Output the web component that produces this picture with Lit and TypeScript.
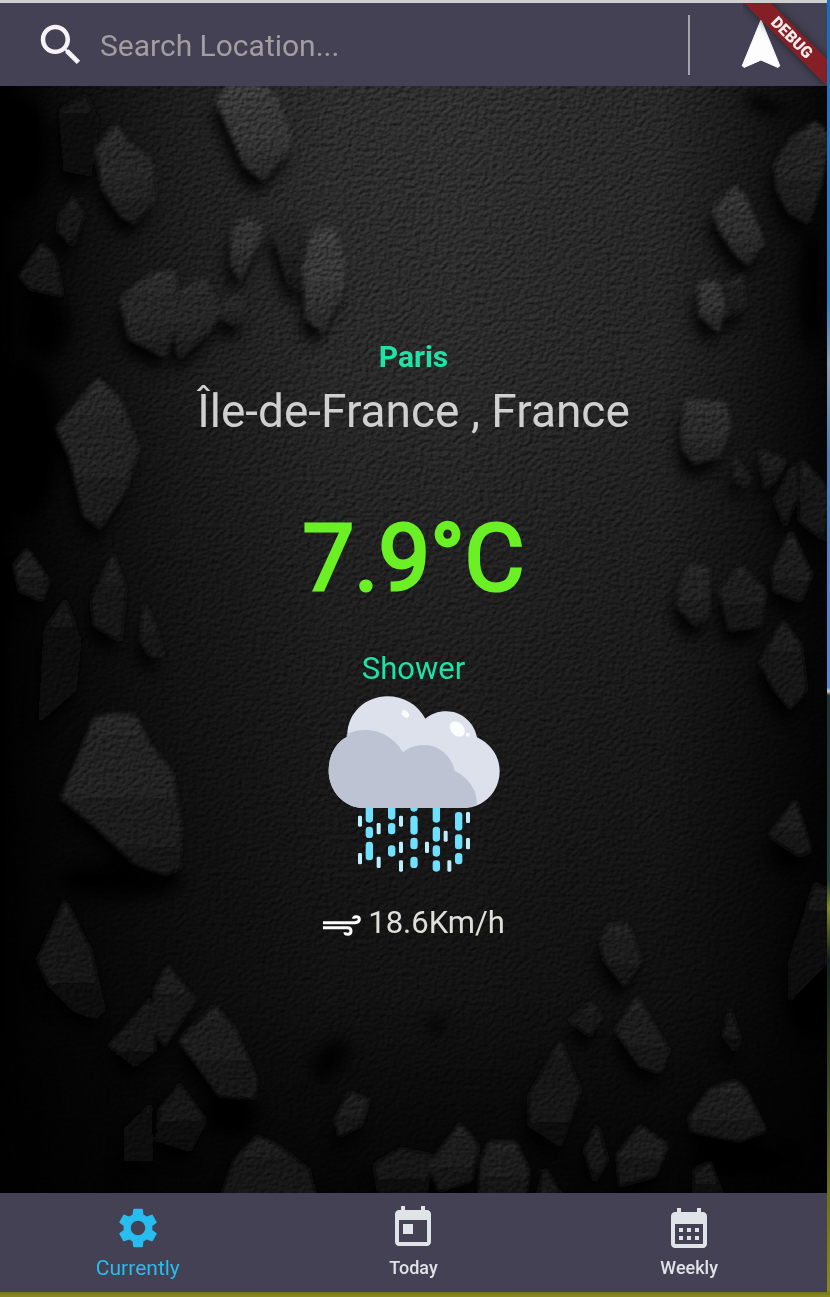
import { LitElement, html, svg, css } from "lit";
import { customElement, state } from "lit/decorators.js";

interface Rock {
  points: string;
  shade: string;
}

// Stones of the backdrop, in the scene's own coordinates.
const rocks: Rock[] = [
  { points: "20,275 42,245 55,258 62,295 30,288", shade: "#181818" },
  { points: "60,215 73,198 84,215 72,245 58,230", shade: "#171717" },
  { points: "60,110 85,95 98,120 90,175 65,170", shade: "#0f0f0f" },
  { points: "97,148 116,126 128,143 145,155 152,165 153,200 134,222 122,216 103,188", shade: "#262626" },
  { points: "217,101 228,86 262,84 278,100 291,140 288,150 263,179 245,165 232,135", shade: "#363636" },
  { points: "236,225 246,218 261,225 259,240 240,278 232,265 232,240", shade: "#303030" },
  { points: "272,230 290,215 302,225 300,290 290,285", shade: "#202020" },
  { points: "312,235 318,229 334,229 344,260 343,290 322,330 307,318 304,265", shade: "#373737" },
  { points: "121,300 130,290 155,273 175,272 176,320 165,356 130,338", shade: "#272727" },
  { points: "180,290 205,278 220,310 210,330 180,357 176,340", shade: "#262626" },
  { points: "225,300 240,296 245,315 235,325 222,318", shade: "#252525" },
  { points: "57,428 98,379 120,400 138,448 125,490 100,527 85,515 70,455", shade: "#232323" },
  { points: "15,565 27,550 48,580 42,600 20,590", shade: "#1a1a1a" },
  { points: "92,600 113,555 125,590 120,640 95,625", shade: "#191919" },
  { points: "145,605 152,620 163,655 150,655 141,640", shade: "#1a1a1a" },
  { points: "45,630 65,600 80,640 75,690 40,720", shade: "#0f0f0f" },
  { points: "62,797 95,718 115,714 135,716 150,745 172,773 180,830 178,868 165,873 135,862 95,825", shade: "#202020" },
  { points: "38,960 65,902 90,950 103,1010 95,1017 75,1010 50,985", shade: "#141414" },
  { points: "110,1045 150,1000 155,1050 135,1065", shade: "#151515" },
  { points: "155,990 168,967 195,1000 165,1045 155,1030", shade: "#191919" },
  { points: "180,1040 215,1007 235,1030 256,1080 254,1097 220,1095", shade: "#1b1b1b" },
  { points: "160,1110 180,1085 205,1120 190,1150 158,1140", shade: "#121212" },
  { points: "125,1130 150,1105 152,1160 125,1160", shade: "#0d0d0d" },
  { points: "222,1196 235,1160 258,1137 275,1145 308,1170 315,1196", shade: "#191919" },
  { points: "335,1120 350,1094 368,1100 360,1125 340,1135", shade: "#1a1a1a" },
  { points: "375,1165 400,1150 430,1155 425,1196 380,1196", shade: "#131313" },
  { points: "775,165 790,140 815,122 829,135 820,185 808,222 790,213 778,190", shade: "#212121" },
  { points: "713,209 735,187 745,197 763,242 748,263 737,255 720,230", shade: "#2f2f2f" },
  { points: "722,285 742,275 745,305 728,318", shade: "#1e1e1e" },
  { points: "699,285 705,281 718,283 724,310 718,330 700,315", shade: "#303030" },
  { points: "682,430 687,400 725,403 730,425 720,455 695,463 684,450", shade: "#2b2b2b" },
  { points: "760,450 785,460 775,480 765,488", shade: "#1a1a1a" },
  { points: "735,458 750,478 745,486 735,478", shade: "#1d1d1d" },
  { points: "775,500 795,464 797,495 785,525", shade: "#171717" },
  { points: "802,460 829,490 824,540 800,520", shade: "#171717" },
  { points: "773,570 791,533 811,575 800,600 775,590", shade: "#1d1d1d" },
  { points: "680,585 690,565 708,568 708,615 695,625 677,605", shade: "#212121" },
  { points: "720,590 740,566 765,590 760,625 730,630", shade: "#1b1b1b" },
  { points: "760,662 783,622 800,645 806,690 790,708 775,690", shade: "#191919" },
  { points: "770,835 795,802 810,850 800,855", shade: "#1a1a1a" },
  { points: "790,960 815,884 829,890 829,960 790,1000", shade: "#0f0f0f" },
  { points: "730,1010 740,1040 735,1050 724,1035", shade: "#141414" },
  { points: "601,940 610,925 628,925 640,960 625,985 605,960", shade: "#1c1c1c" },
  { points: "570,1020 592,1003 602,1018 590,1035", shade: "#191919" },
  { points: "616,1030 637,998 668,1050 660,1072 640,1065", shade: "#1c1c1c" },
  { points: "530,1095 560,1042 580,1090 560,1145 530,1125", shade: "#151515" },
  { points: "690,1118 710,1090 735,1082 745,1090 765,1130 740,1140 692,1130", shade: "#1c1c1c" },
  { points: "430,1165 460,1125 477,1145 470,1180 440,1190", shade: "#1c1c1c" },
  { points: "482,1160 490,1143 515,1143 528,1170 525,1196 480,1196", shade: "#1c1c1c" },
  { points: "585,1150 597,1127 607,1160 595,1180", shade: "#161616" },
  { points: "618,1155 640,1127 667,1145 655,1175 620,1185", shade: "#1a1a1a" },
  { points: "538,1196 545,1170 562,1196", shade: "#171717" },
  { points: "695,1170 710,1163 722,1196 695,1196", shade: "#131313" },
];

@customElement("stone-backdrop")
class StoneBackdrop extends LitElement {
  static styles = css`
    :host {
      display: block;
    }
    svg {
      display: block;
      width: 100%;
      height: 100%;
    }
    .grain {
      mix-blend-mode: overlay;
    }
  `;

  render() {
    return html`
      <svg viewBox="0 86 827 1107" preserveAspectRatio="xMidYMid slice" aria-hidden="true">
        <defs>
          <linearGradient id="base" x1="0" y1="0" x2="0" y2="1">
            <stop offset="0" stop-color="#303030" />
            <stop offset="0.25" stop-color="#2b2b2b" />
            <stop offset="0.5" stop-color="#1f1f1f" />
            <stop offset="0.75" stop-color="#151515" />
            <stop offset="1" stop-color="#0c0c0c" />
          </linearGradient>
          <linearGradient id="sides" x1="0" y1="0" x2="1" y2="0">
            <stop offset="0" stop-color="#000" stop-opacity="1" />
            <stop offset="0.08" stop-color="#000" stop-opacity="0.75" />
            <stop offset="0.22" stop-color="#000" stop-opacity="0.38" />
            <stop offset="0.4" stop-color="#000" stop-opacity="0.05" />
            <stop offset="0.55" stop-color="#000" stop-opacity="0" />
            <stop offset="0.8" stop-color="#000" stop-opacity="0.15" />
            <stop offset="0.9" stop-color="#000" stop-opacity="0.5" />
            <stop offset="1" stop-color="#000" stop-opacity="0.9" />
          </linearGradient>
          <linearGradient id="floor" x1="0" y1="0" x2="0" y2="1">
            <stop offset="0.82" stop-color="#000" stop-opacity="0" />
            <stop offset="1" stop-color="#000" stop-opacity="0.6" />
          </linearGradient>
          <filter id="shadow" x="-10%" y="-10%" width="120%" height="120%">
            <feGaussianBlur stdDeviation="7" />
          </filter>
          <filter id="soft" x="-5%" y="-5%" width="110%" height="110%">
            <feGaussianBlur stdDeviation="2" />
          </filter>
          <filter id="relief" x="0" y="0" width="100%" height="100%" color-interpolation-filters="sRGB">
            <feTurbulence type="fractalNoise" baseFrequency="0.22 0.24" numOctaves="2" seed="8" />
            <feColorMatrix values="0 0 0 0 0  0 0 0 0 0  0 0 0 0 0  1 0 0 0 0" />
            <feDiffuseLighting surfaceScale="1.2" diffuseConstant="0.7" lighting-color="#fff">
              <feDistantLight azimuth="235" elevation="45" />
            </feDiffuseLighting>
          </filter>
          <linearGradient id="rim" x1="0" y1="0" x2="0" y2="1">
            <stop offset="0" stop-color="#fff" stop-opacity="0.04" />
            <stop offset="0.5" stop-color="#000" stop-opacity="0" />
            <stop offset="1" stop-color="#000" stop-opacity="0.3" />
          </linearGradient>
        </defs>
        <rect y="86" width="827" height="1107" fill="url(#base)" />
        <rect y="86" width="827" height="1107" fill="url(#sides)" />
        <rect y="86" width="827" height="1107" fill="url(#floor)" />
        <g filter="url(#shadow)" fill="#000" opacity="0.9">
          <ellipse cx="20" cy="150" rx="30" ry="55" />
          <ellipse cx="45" cy="325" rx="25" ry="35" />
          <ellipse cx="25" cy="440" rx="35" ry="80" />
          <ellipse cx="120" cy="880" rx="62" ry="20" />
          <ellipse cx="230" cy="1115" rx="28" ry="24" />
          <ellipse cx="812" cy="290" rx="14" ry="60" />
          <ellipse cx="808" cy="1000" rx="24" ry="40" />
          <ellipse cx="790" cy="860" rx="20" ry="12" />
          <ellipse cx="765" cy="105" rx="22" ry="8" transform="rotate(20 765 105)" />
          <ellipse cx="330" cy="1060" rx="14" ry="24" transform="rotate(40 330 1060)" />
          <ellipse cx="436" cy="1025" rx="8" ry="8" />
          <ellipse cx="740" cy="1160" rx="50" ry="16" />
          <g transform="translate(-5 15)">${rocks.map((r) => svg`<polygon points=${r.points} />`)}</g>
        </g>
        <g filter="url(#soft)" stroke-linejoin="round">
          ${rocks.map(
            (r) => svg`
              <polygon points=${r.points} fill=${r.shade} stroke=${r.shade} stroke-width="3" />
              <polygon points=${r.points} fill="url(#rim)" />`
          )}
        </g>
        <rect class="grain" y="86" width="827" height="1107" filter="url(#relief)" />
      </svg>
    `;
  }
}

// Rain under the cloud: x, top, bottom.
const heavyDrops = [
  [195, 490, 546], [195, 558, 592], [195, 603, 659],
  [262, 490, 537], [262, 547, 581], [262, 614, 648],
  [329, 480, 513], [329, 525, 582], [329, 591, 626], [329, 648, 682],
  [396, 480, 546], [396, 558, 603], [396, 614, 648], [396, 659, 693],
  [463, 514, 570], [463, 581, 626], [463, 637, 671],
];
const lightDrops = [
  [172, 525, 558], [172, 637, 671], [228, 547, 581], [228, 648, 682],
  [295, 525, 558], [295, 603, 637], [295, 659, 693], [373, 603, 637],
  [429, 570, 603], [440, 659, 693], [496, 514, 547], [496, 592, 626],
];

const showerIcon = html`
  <svg class="shower" viewBox="82 166 516 528" role="img" aria-label="Shower">
    ${heavyDrops.map(([x, a, b]) => svg`<rect x=${x} y=${a} width="22" height=${b - a} rx="10" fill="#6fe1ff" />`)}
    ${lightDrops.map(([x, a, b]) => svg`<rect x=${x} y=${a} width="12" height=${b - a} rx="4" fill="#bdeefb" />`)}
    <path fill="#dde1ec" d="M190 502H490C550 502 597 452 597 392C597 345 570 310 529 290C520 245 483 212 437 212C412 212 391 220 374 234C350 190 308 167 260 167C195 167 138 217 140 288C105 305 84 345 84 390C84 452 132 502 190 502Z" />
    <path fill="#bdc3d2" d="M138 281C155 272 172 268 195 268C240 268 285 295 307 335C325 320 345 313 371 313C415 313 453 345 462 391C500 408 529 445 529 490C515 498 500 502 485 502H190C132 502 84 452 84 390C84 345 105 305 138 289Z" />
    <g fill="#fafcff">
      <ellipse cx="314" cy="220" rx="13" ry="9" transform="rotate(45 314 220)" />
      <ellipse cx="470" cy="265" rx="26" ry="19" transform="rotate(45 470 265)" />
      <circle cx="501" cy="282" r="6" />
    </g>
  </svg>
`;

const tabs = [
  {
    label: "Currently",
    icon: "M19.14 12.94c.04-.3.06-.61.06-.94 0-.32-.02-.64-.07-.94l2.03-1.58c.18-.14.23-.41.12-.61l-1.92-3.32c-.12-.22-.37-.29-.59-.22l-2.39.96c-.5-.38-1.03-.7-1.62-.94l-.36-2.54c-.04-.24-.24-.41-.48-.41h-3.84c-.24 0-.43.17-.47.41l-.36 2.54c-.59.24-1.13.57-1.62.94l-2.39-.96c-.22-.08-.47 0-.59.22L2.74 8.87c-.12.21-.08.47.12.61l2.03 1.58c-.05.3-.09.63-.09.94s.02.64.07.94l-2.03 1.58c-.18.14-.23.41-.12.61l1.92 3.32c.12.22.37.29.59.22l2.39-.96c.5.38 1.03.7 1.62.94l.36 2.54c.05.24.24.41.48.41h3.84c.24 0 .44-.17.47-.41l.36-2.54c.59-.24 1.13-.56 1.62-.94l2.39.96c.22.08.47 0 .59-.22l1.92-3.32c.12-.22.07-.47-.12-.61l-2.01-1.58zM12 15.6c-1.98 0-3.6-1.62-3.6-3.6s1.62-3.6 3.6-3.6 3.6 1.62 3.6 3.6-1.62 3.6-3.6 3.6z",
  },
  {
    label: "Today",
    icon: "M19 3h-1V1h-2v2H8V1H6v2H5c-1.11 0-1.99.9-1.99 2L3 19c0 1.1.89 2 2 2h14c1.1 0 2-.9 2-2V5c0-1.1-.9-2-2-2zm0 16H5V8h14v11zM7 10h5v5H7z",
  },
  {
    label: "Weekly",
    icon: "M19 4h-1V2h-2v2H8V2H6v2H5c-1.11 0-1.99.9-1.99 2L3 20c0 1.1.89 2 2 2h14c1.1 0 2-.9 2-2V6c0-1.1-.9-2-2-2zm0 16H5V10h14v10zM9 14H7v-2h2v2zm4 0h-2v-2h2v2zm4 0h-2v-2h2v2zm-8 4H7v-2h2v2zm4 0h-2v-2h2v2zm4 0h-2v-2h2v2z",
  },
];

@customElement("app-root")
class AppRoot extends LitElement {
  static styles = css`
    :host {
      display: flex;
      min-height: 100vh;
      box-sizing: border-box;
      padding: 0 3px 5px 0;
      font-family: Roboto, "Liberation Sans", sans-serif;
      background:
        linear-gradient(#77761c, #8b8a1e) bottom / 100% 5px no-repeat,
        linear-gradient(
          #1b6fb5 0, #2580c8 23%, #8a9cb0 28%, #4a7fb5 35%, #4d8fd0 53%,
          #c8ccd0 53.3%, #1d3236 53.6%, #24423a 68%, #7e8c1c 70%, #10201f 74%,
          #3c4a18 84%, #6d7218 92%, #8b8a1e 100%
        );
    }
    .window {
      flex: 1;
      display: flex;
      flex-direction: column;
      position: relative;
      border-top: 3px solid #cfcfcf;
      background: #000;
    }
    .bar {
      display: flex;
      align-items: center;
      height: 83px;
      padding: 0 36px 0 34px;
      background: #444154;
    }
    .search {
      flex: 1;
      display: flex;
      align-items: center;
      gap: 12px;
    }
    .search svg {
      width: 54px;
      height: 54px;
      fill: #f5f3f7;
    }
    .search input {
      flex: 1;
      min-width: 0;
      padding: 2px 0 0;
      border: 0;
      outline: 0;
      background: none;
      color: #f5f3f7;
      font: 30px/36px Roboto, "Liberation Sans", sans-serif;
    }
    .search input::placeholder {
      color: #a09e9f;
      opacity: 1;
    }
    .rule {
      width: 2px;
      height: 60px;
      margin-right: 41px;
      background: #a8a4ad;
    }
    .locate {
      display: block;
      padding: 0;
      border: 0;
      background: none;
    }
    .locate svg {
      display: block;
      width: 60px;
      height: 60px;
      fill: #fdfdfd;
      stroke: #fdfdfd;
      stroke-width: 0.4;
      stroke-linejoin: round;
    }
    .corner {
      position: absolute;
      top: 0;
      right: 0;
      width: 84px;
      height: 83px;
      overflow: hidden;
      pointer-events: none;
    }
    .ribbon {
      position: absolute;
      top: 25px;
      left: -11px;
      width: 120px;
      transform: rotate(45deg);
      background: #831f25;
      box-shadow: 0 0 10px rgba(0, 0, 0, 0.5);
      color: #f5eded;
      font-size: 16px;
      font-weight: 900;
      line-height: 19px;
      text-align: center;
    }
    .scene {
      flex: 1;
      display: grid;
      min-height: 640px;
    }
    stone-backdrop {
      grid-area: 1 / 1;
      height: 0;
      min-height: 100%;
    }
    .weather {
      grid-area: 1 / 1;
      z-index: 1;
      display: flex;
      flex-direction: column;
      align-items: center;
      justify-content: center;
      text-align: center;
    }
    .weather p,
    .weather h1 {
      margin: 0;
    }
    .weather .city {
      color: #1fe3a4;
      font-size: 30px;
      font-weight: 700;
      line-height: 36px;
    }
    .weather .region {
      margin-top: 10px;
      color: #d0d0d0;
      font-size: 46px;
      line-height: 52px;
    }
    .weather .temperature {
      margin-top: 66px;
      color: #6af024;
      font-size: 92px;
      font-weight: 400;
      line-height: 112px;
      -webkit-text-stroke: 3px #6af024;
    }
    .weather .condition {
      margin-top: 36px;
      color: #1fe3a4;
      font-size: 31px;
      line-height: 36px;
    }
    .shower {
      width: 172px;
      height: 176px;
      margin-top: 9px;
    }
    .weather .wind {
      display: flex;
      align-items: center;
      gap: 6px;
      margin-top: 33px;
      color: #dfe0da;
      font-size: 31px;
      line-height: 36px;
    }
    .wind svg {
      width: 40px;
      height: 30px;
      fill: none;
      stroke: #fff;
      stroke-width: 9;
    }
    .tabs {
      display: grid;
      grid-template-columns: repeat(3, 1fr);
      height: 99px;
      background: #444154;
    }
    .tab {
      display: flex;
      flex-direction: column;
      align-items: center;
      padding: 11px 0 0;
      border: 0;
      background: none;
      color: #e0e3e8;
      font: 500 18px/32px Roboto, "Liberation Sans", sans-serif;
    }
    .tab.active {
      color: #27bdee;
      font-size: 21px;
      font-weight: 400;
    }
    .tab svg {
      width: 48px;
      height: 48px;
      fill: currentColor;
    }
  `;

  @state() private active = "Currently";

  render() {
    return html`
      <div class="window">
        <header class="bar">
          <label class="search">
            <svg viewBox="0 0 24 24" aria-hidden="true">
              <path d="M15.5 14h-.79l-.28-.27C15.41 12.59 16 11.11 16 9.5 16 5.91 13.09 3 9.5 3S3 5.91 3 9.5 5.91 16 9.5 16c1.61 0 3.09-.59 4.23-1.57l.27.28v.79l5 4.99L20.49 19l-4.99-5zm-6 0C7.01 14 5 11.99 5 9.5S7.01 5 9.5 5 14 7.01 14 9.5 11.99 14 9.5 14z" />
            </svg>
            <input type="text" placeholder="Search Location..." aria-label="Search Location" />
          </label>
          <span class="rule"></span>
          <button class="locate" type="button" aria-label="Use my location">
            <svg viewBox="0 0 24 24" aria-hidden="true">
              <path d="M12 2L4.5 20.29l.71.71L12 18l6.79 3 .71-.71z" />
            </svg>
          </button>
        </header>
        <main class="scene">
          <stone-backdrop></stone-backdrop>
          <section class="weather">
            <h1 class="city">Paris</h1>
            <p class="region">Île-de-France , France</p>
            <p class="temperature">7.9°C</p>
            <p class="condition">Shower</p>
            ${showerIcon}
            <p class="wind">
              <svg viewBox="66 802 120 90" aria-hidden="true">
                <path d="M69 846H165C174 846 178 841 178 836C178 831 174 828 168 828C164 828 161 830 161 834" />
                <path d="M69 861H143C150 861 153 866 153 871C153 877 149 881 143 881C138 881 135 879 135 875" />
              </svg>
              <span>18.6Km/h</span>
            </p>
          </section>
        </main>
        <nav class="tabs">
          ${tabs.map(
            (t) => html`
              <button
                type="button"
                class="tab ${t.label === this.active ? "active" : ""}"
                @click=${() => (this.active = t.label)}
              >
                <svg viewBox="0 0 24 24" aria-hidden="true"><path d=${t.icon} /></svg>
                <span>${t.label}</span>
              </button>
            `
          )}
        </nav>
        <div class="corner"><div class="ribbon">DEBUG</div></div>
      </div>
    `;
  }
}
